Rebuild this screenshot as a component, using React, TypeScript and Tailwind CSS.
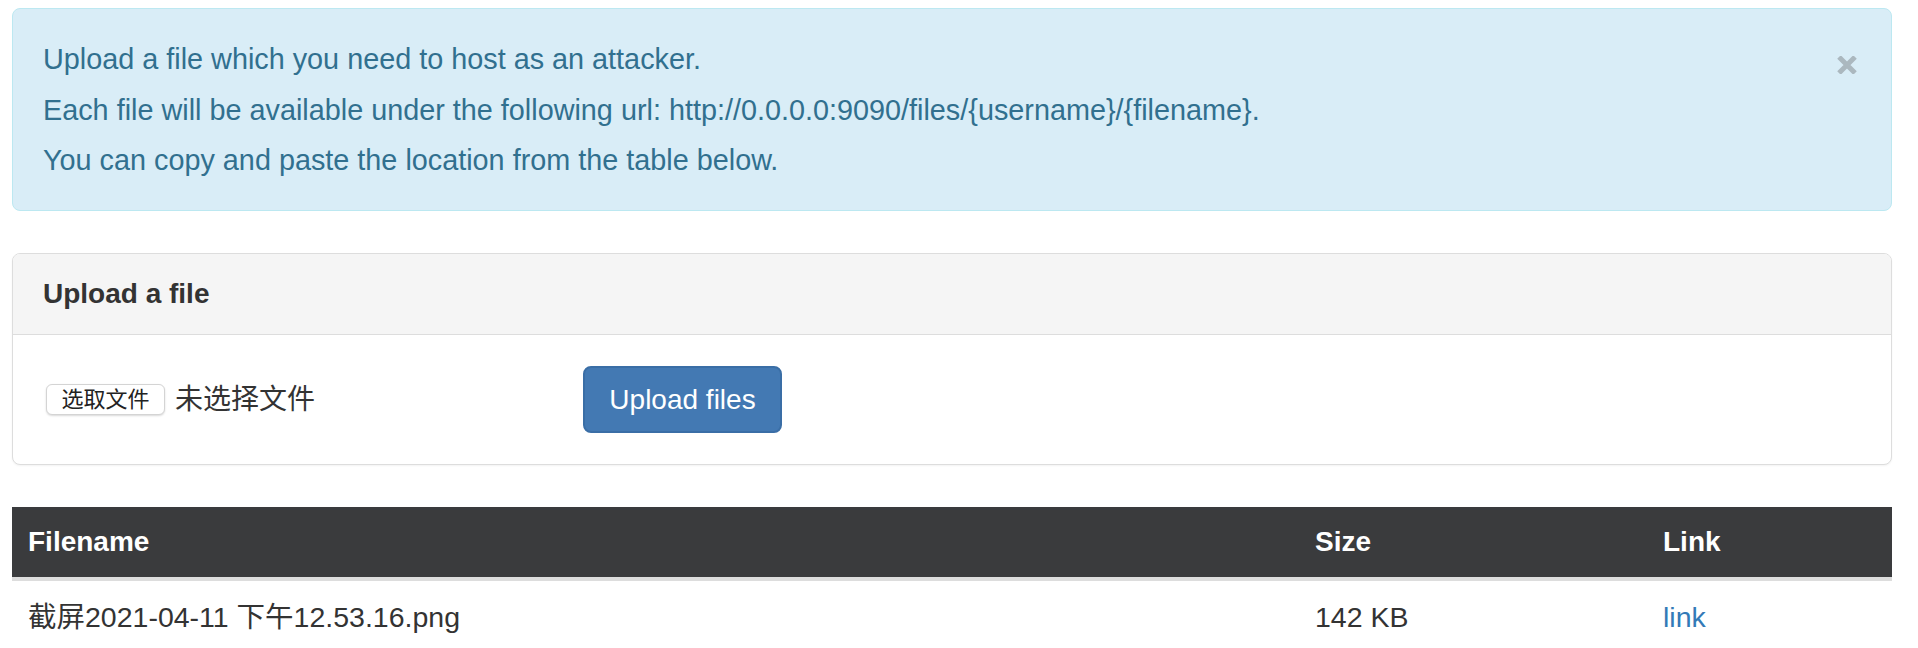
const CloseIcon = () => (
  <svg width="20" height="18" viewBox="0 0 20 18" fill="none">
    <path d="M2 1 L18 17 M18 1 L2 17" stroke="#abb8bf" strokeWidth="5" />
  </svg>
);

const InfoAlert = () => {
  return (
    <div className="relative rounded-[8px] border border-[#bce8f1] bg-[#d9edf7] px-[30px] py-[30px] text-[28.8px] leading-[40px] text-[#31708f]">
      <p className="mb-[11px]">Upload a file which you need to host as an attacker.</p>
      <p className="mb-[10px]">
        Each file will be available under the following url: http://0.0.0.0:9090/files/{'{username}'}/{'{filename}'}.
      </p>
      <p>You can copy and paste the location from the table below.</p>
      {/* dismiss button */}
      <button className="absolute right-[34px] top-[47px] flex">
        <CloseIcon />
      </button>
    </div>
  );
};

const UploadPanel = () => {
  return (
    <div className="mt-[42px] rounded-[8px] border border-[#ddd] bg-white shadow-[0_1px_2px_rgba(0,0,0,0.05)]">
      <div className="rounded-t-[7px] border-b border-[#ddd] bg-[#f5f5f5] px-[30px] py-[20px] text-[28px] font-bold leading-[40px] text-[#333]">
        Upload a file
      </div>
      <div className="flex items-center px-[30px] py-[31px]">
        <div className="flex w-[540px] items-center">
          <span className="ml-[3px] flex h-[31px] w-[119px] items-center justify-center rounded-[6px] border border-[#d4d4d4] bg-white text-[22px] leading-none text-[#222] shadow-[0_1px_2px_rgba(0,0,0,0.15)]">
            选取文件
          </span>
          <span className="ml-[10px] text-[28px] leading-[40px] text-[#333]">未选择文件</span>
        </div>
        <button className="h-[67px] w-[199px] rounded-[8px] border-2 border-[#3a6ea6] bg-[#4379b3] text-[28px] leading-[40px] text-white">
          Upload files
        </button>
      </div>
    </div>
  );
};

const FilesTable = () => {
  return (
    <table className="mt-[42px] w-full border-separate border-spacing-0 text-[28px] leading-[40px] text-[#333]">
      <thead>
        <tr className="bg-[#3a3b3d] text-white">
          <th className="w-[1287px] border-b-4 border-[#ddd] px-[16px] py-[15px] text-left font-bold">Filename</th>
          <th className="w-[348px] border-b-4 border-[#ddd] px-[16px] py-[15px] text-left font-bold">Size</th>
          <th className="border-b-4 border-[#ddd] px-[16px] py-[15px] text-left font-bold">Link</th>
        </tr>
      </thead>
      <tbody className="text-[28.5px]">
        <tr>
          <td className="px-[16px] pt-[16px] pb-[18px]">截屏2021-04-11 下午12.53.16.png</td>
          <td className="px-[16px] pt-[16px] pb-[18px]">142 KB</td>
          <td className="px-[16px] pt-[16px] pb-[18px]">
            <a href="#" className="text-[#337ab7]">link</a>
          </td>
        </tr>
      </tbody>
    </table>
  );
};

export default function App() {
  return (
    <div className="h-[648px] w-[1918px] overflow-hidden bg-white font-['Liberation_Sans','Noto_Sans_CJK_SC',sans-serif]">
      <div className="ml-[12px] w-[1880px] pt-[8px]">
        <InfoAlert />
        <UploadPanel />
        <FilesTable />
      </div>
    </div>
  );
}
